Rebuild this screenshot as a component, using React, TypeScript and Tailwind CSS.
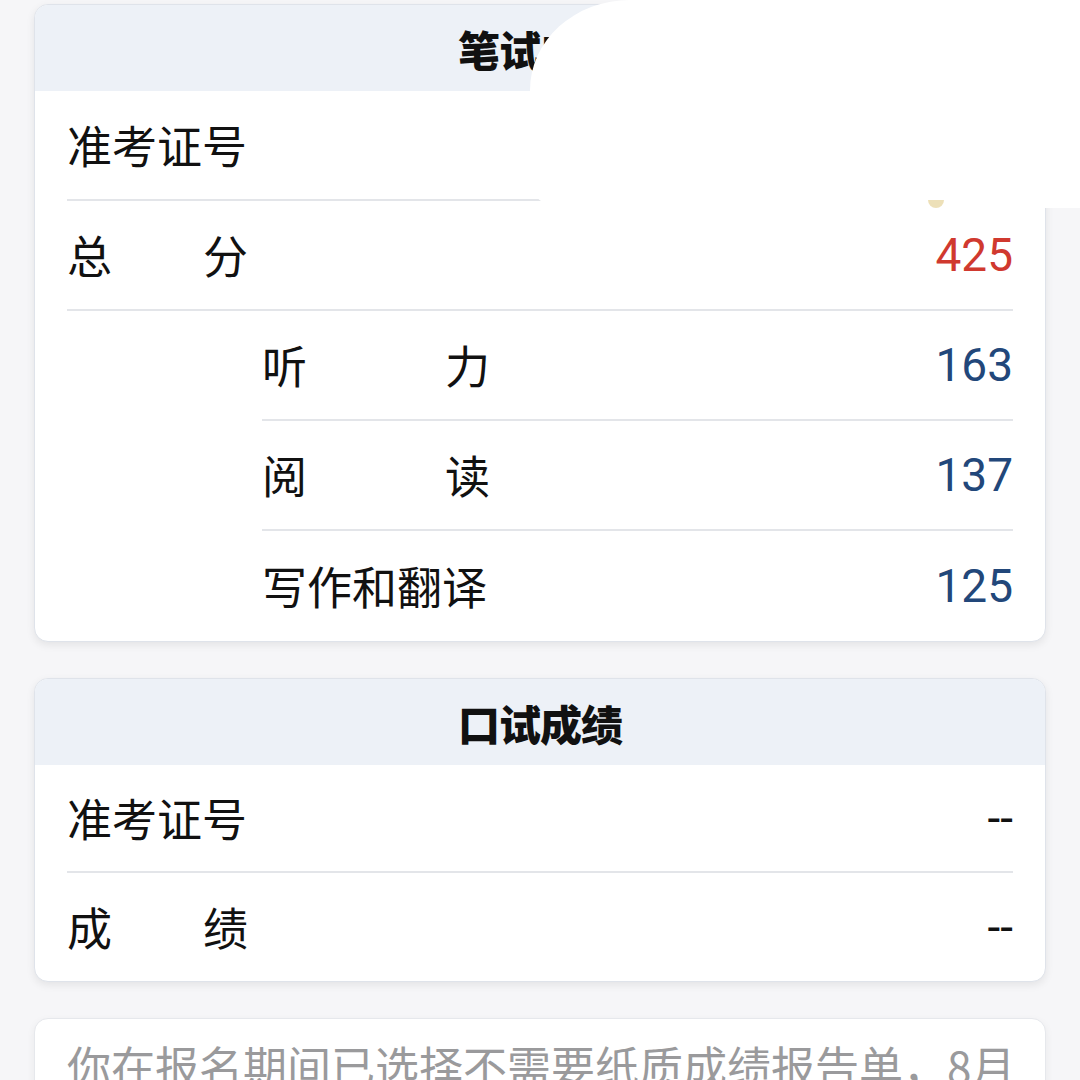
import React from "react";

const FONT = { fontFamily: '"Noto Sans CJK SC", "Noto Sans", sans-serif' };

function Label({ text, width }: { text: string; width: string }) {
  // two-char labels are spread over the width of a longer label
  if (text.length === 2) {
    return (
      <span className={`flex justify-between ${width}`}>
        <span>{text[0]}</span>
        <span>{text[1]}</span>
      </span>
    );
  }
  return <span>{text}</span>;
}

function Row({
  label,
  value,
  valueClass = "text-[#111]",
  width = "w-[181px]",
  h = "h-[110px]",
  last = false,
}: {
  label: string;
  value: string;
  valueClass?: string;
  width?: string;
  h?: string;
  last?: boolean;
}) {
  return (
    <div className={`flex items-center justify-between ${h} ${last ? "" : "border-b-2 border-[#e3e5e9]"}`}>
      <Label text={label} width={width} />
      <span className={`font-['Roboto',sans-serif] text-[46px] ${valueClass}`}>{value}</span>
    </div>
  );
}

function CardHeader({ title }: { title: string }) {
  return (
    <div className="h-[86px] bg-[#edf1f7] flex items-center justify-center text-[42px] font-black text-[#111] tracking-tight">
      {title}
    </div>
  );
}

export default function App() {
  return (
    <div className="w-[1080px] h-[1080px] overflow-hidden bg-[#f6f6f8] relative" style={FONT}>
      <div className="flex flex-col gap-[36px] px-[34px] pt-[4px]">
        {/* 笔试成绩 */}
        <div className="bg-white rounded-[14px] overflow-hidden border border-[#dfe3ea] shadow-[0_3px_8px_rgba(0,0,0,0.08)]">
          <CardHeader title="笔试成绩" />
          <div className="px-[32px] text-[45px] text-[#111]">
            <Row label="准考证号" value="" />
            <Row label="总分" value="425" valueClass="text-[#d0392f]" />
            <div className="ml-[195px]">
              <Row label="听力" value="163" valueClass="text-[#22477a]" width="w-[228px]" />
              <Row label="阅读" value="137" valueClass="text-[#22477a]" width="w-[228px]" />
              <Row label="写作和翻译" value="125" valueClass="text-[#22477a]" last />
            </div>
          </div>
        </div>

        {/* 口试成绩 */}
        <div className="bg-white rounded-[14px] overflow-hidden border border-[#dfe3ea] shadow-[0_3px_8px_rgba(0,0,0,0.08)]">
          <CardHeader title="口试成绩" />
          <div className="px-[32px] text-[45px] text-[#111]">
            <Row label="准考证号" value="--" h="h-[108px]" />
            <Row label="成绩" value="--" h="h-[108px]" last />
          </div>
        </div>

        {/* 提示 */}
        <div className="bg-white rounded-[14px] border border-[#e6e8ec] shadow-[0_3px_8px_rgba(0,0,0,0.06)] px-[32px] pt-[16px] pb-[40px]">
          <p className="text-[44px] leading-[60px] text-[#9a9a9c] whitespace-nowrap">
            你在报名期间已选择不需要纸质成绩报告单，8月
          </p>
        </div>
      </div>

      {/* redaction patch over the top right */}
      <div className="absolute left-[530px] top-0 w-[560px] h-[208px] bg-white rounded-tl-[100px_90px] rounded-bl-[30px]" />
      <div className="absolute left-[928px] top-[200px] w-[16px] h-[8px] rounded-b-full bg-[#e5d39a] opacity-70" />
    </div>
  );
}
